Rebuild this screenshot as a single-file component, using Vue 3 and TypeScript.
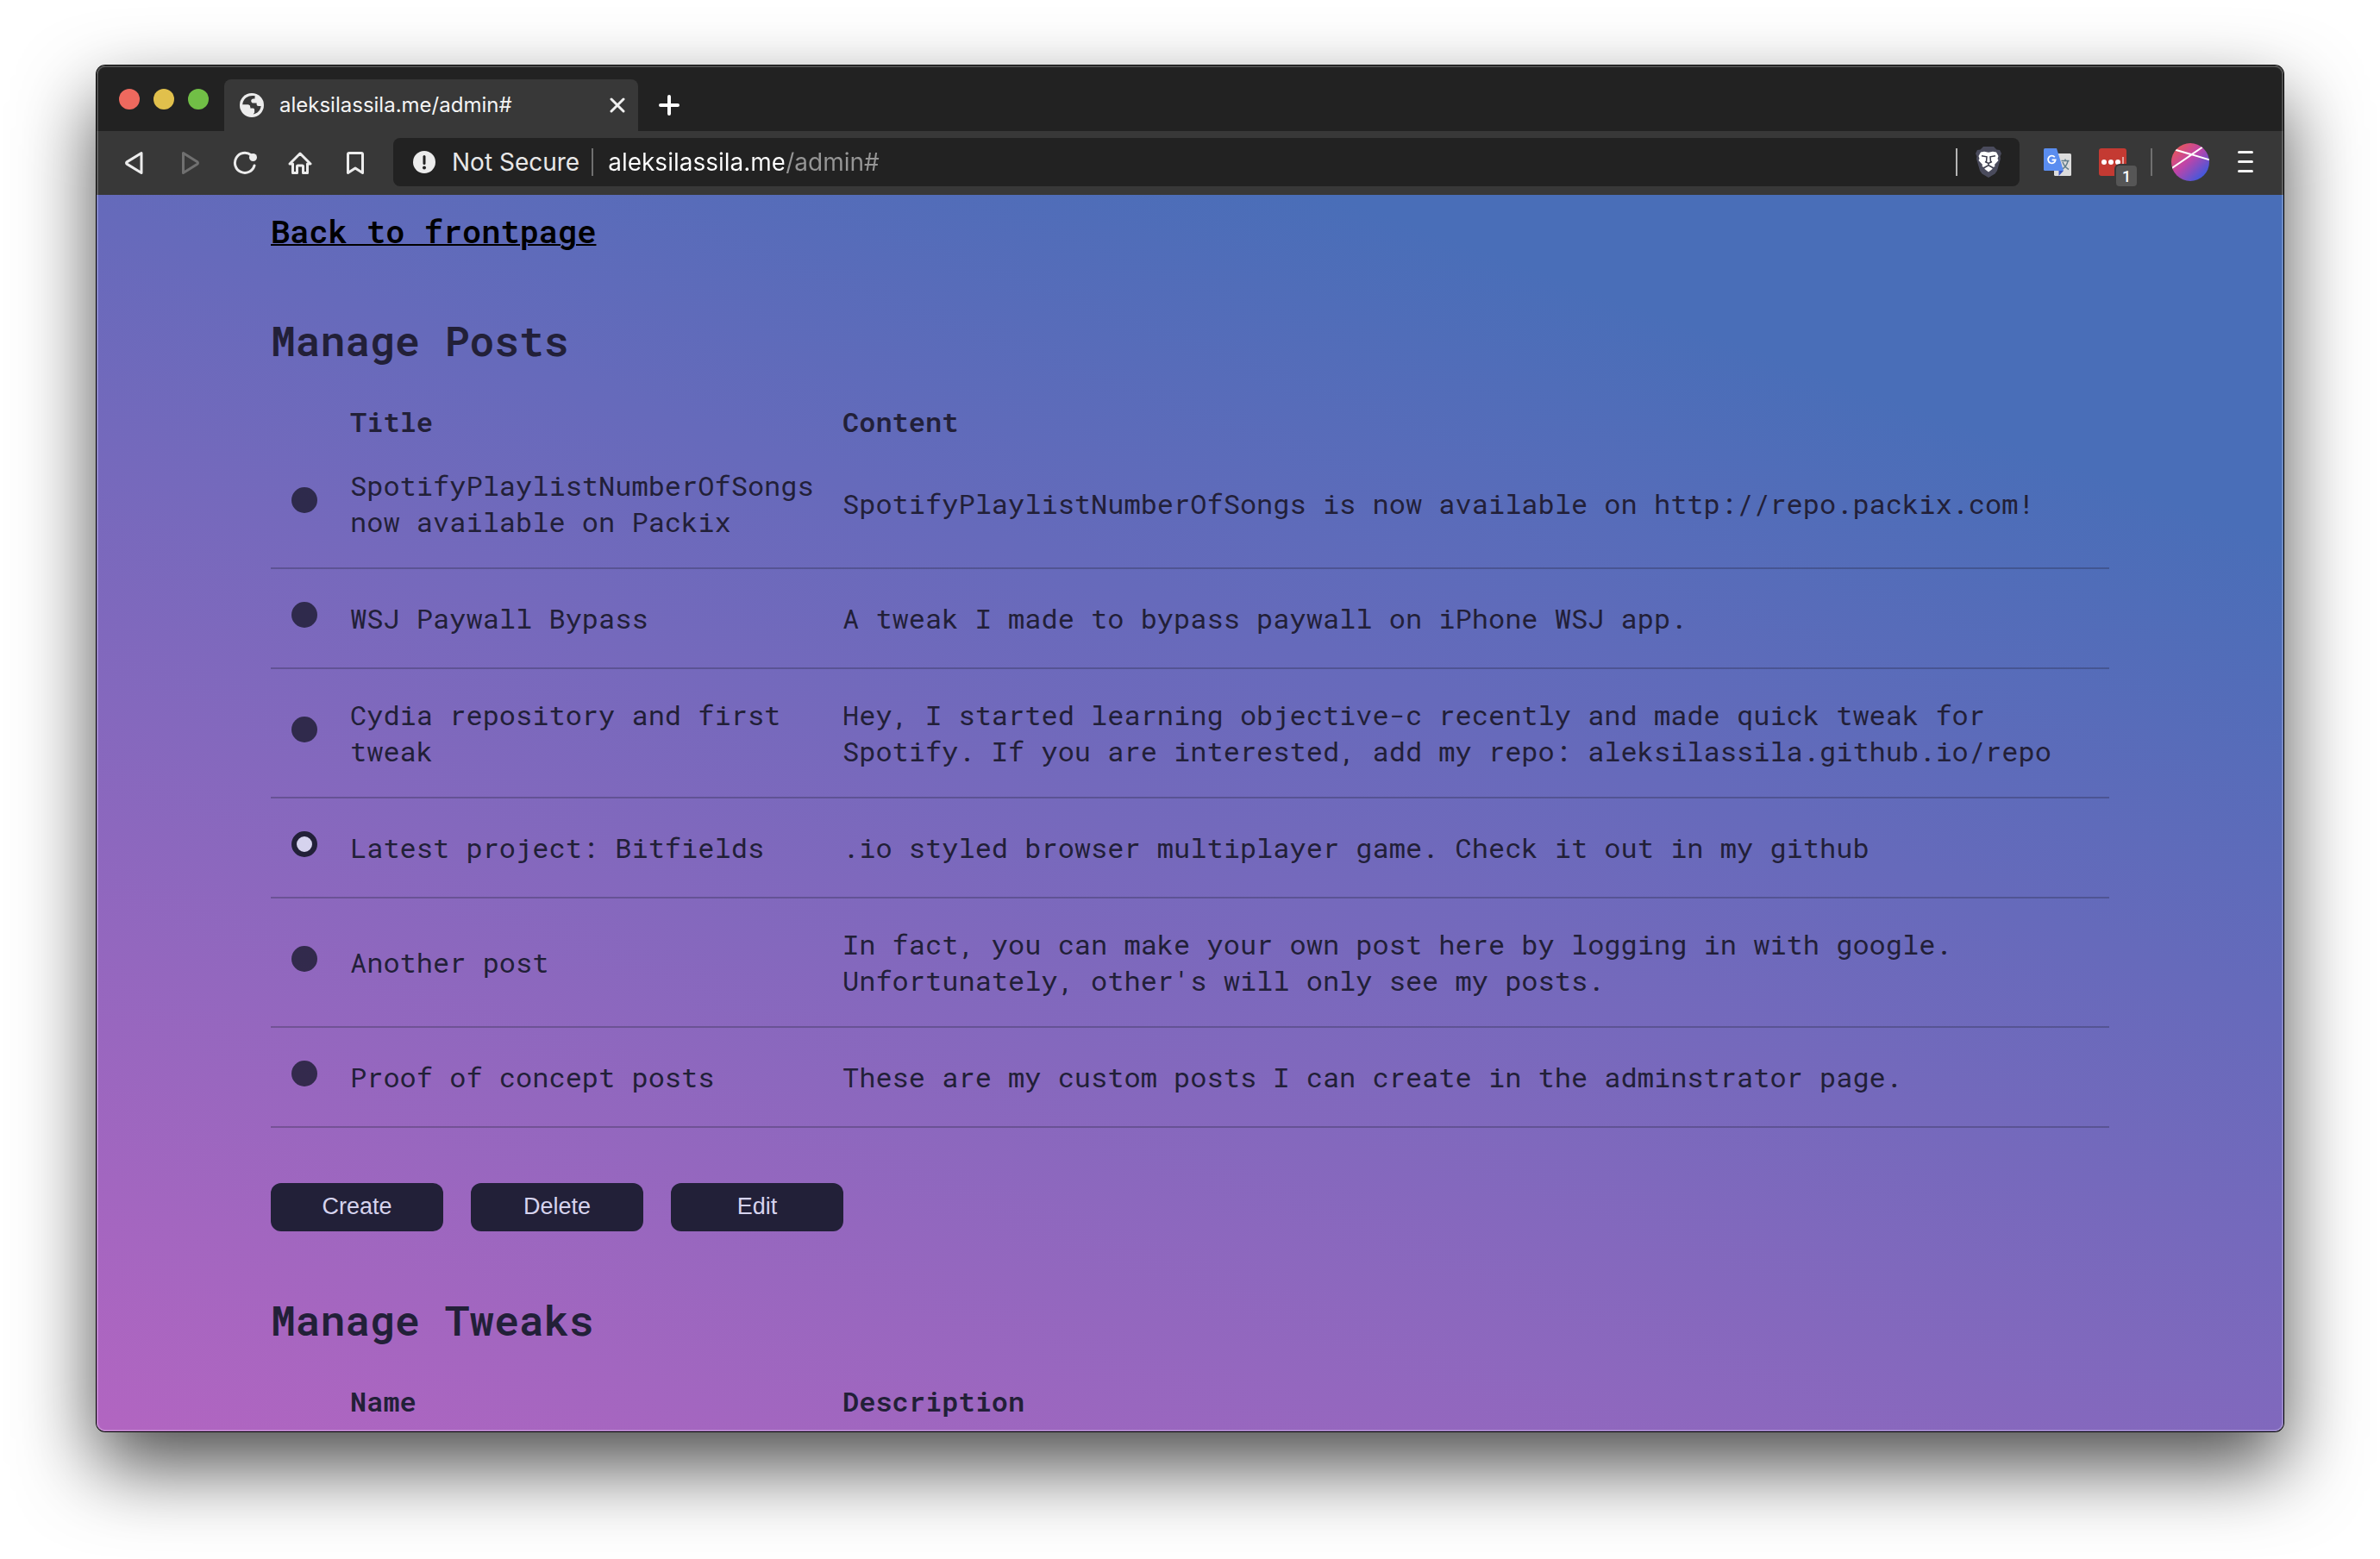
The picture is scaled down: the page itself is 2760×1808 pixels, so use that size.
<script setup lang="ts">
import { ref } from 'vue'

interface Post {
  id: number
  title: string
  content: string
}

const address = ref('aleksilassila.me/admin#')
const selected = ref(4)
const actions: string[] = ['Create', 'Delete', 'Edit']
const posts: Post[] = [
  {
    id: 1,
    title: 'SpotifyPlaylistNumberOfSongs now available on Packix',
    content: 'SpotifyPlaylistNumberOfSongs is now available on http://repo.packix.com!',
  },
  { id: 2, title: 'WSJ Paywall Bypass', content: 'A tweak I made to bypass paywall on iPhone WSJ app.' },
  {
    id: 3,
    title: 'Cydia repository and first tweak',
    content:
      'Hey, I started learning objective-c recently and made quick tweak for Spotify. If you are interested, add my repo: aleksilassila.github.io/repo',
  },
  {
    id: 4,
    title: 'Latest project: Bitfields',
    content: '.io styled browser multiplayer game. Check it out in my github',
  },
  {
    id: 5,
    title: 'Another post',
    content:
      "In fact, you can make your own post here by logging in with google. Unfortunately, other's will only see my posts.",
  },
  {
    id: 6,
    title: 'Proof of concept posts',
    content: 'These are my custom posts I can create in the adminstrator page.',
  },
]
</script>

<template>
  <div class="desktop">
    <div class="window">
      <header class="tabstrip">
        <div class="lights">
          <button class="light red" aria-label="Close window"></button>
          <button class="light yellow" aria-label="Minimize window"></button>
          <button class="light green" aria-label="Zoom window"></button>
        </div>
        <div class="tab">
          <svg class="globe" viewBox="0 0 28 28" width="28" height="28">
            <circle cx="14" cy="14" r="14" fill="#ececec" />
            <path
              d="M11 3.6C6.500 5 3.400 9 3.300 13.500h6.200c1.600 0 2.700 1.200 2.700 2.700v1.300h3.300c1 0 1.600.8 1.600 1.700v3.200l-1.400 2.100c4.800-.8 8.400-4.700 8.900-9.500h-2.700c-1.400 0-2.300-1-2.300-2.300v-1.200h-3.800c-1.500 0-2.600-1.200-2.600-2.600 0-1.500 1.200-2.500 2.600-2.500h1.700V4.700c0-.5.200-.9.500-1.200-2.200-.6-4.800-.5-7 .1z"
              fill="#383838"
            />
            <path d="M3.300 13.500h6.200c1.600 0 2.700 1.200 2.700 2.700v1.300c0 1.300.4 2 1.300 2v5.200C7.800 24.500 3.300 19.500 3.300 13.500z" fill="#ececec" />
          </svg>
          <span class="tab-title">aleksilassila.me/admin#</span>
          <button class="icon" aria-label="Close tab">
            <svg viewBox="0 0 18 18" width="18" height="18">
              <path d="M2 2l14 14M16 2L2 16" stroke="#f0f0f0" stroke-width="3" stroke-linecap="round" />
            </svg>
          </button>
        </div>
        <button class="icon new-tab" aria-label="New tab">
          <svg viewBox="0 0 24 24" width="24" height="24">
            <path d="M12 2v20M2 12h20" stroke="#fff" stroke-width="4" stroke-linecap="round" />
          </svg>
        </button>
      </header>

      <nav class="toolbar">
        <div class="nav-buttons">
          <button class="icon" aria-label="Back">
            <svg viewBox="0 0 28 28" width="28" height="28">
              <path d="M22 2.500v23L5.500 15.400q-2-1.400 0-2.800z" fill="none" stroke="#ececec" stroke-width="3" stroke-linejoin="round" />
            </svg>
          </button>
          <button class="icon" aria-label="Forward">
            <svg viewBox="0 0 28 28" width="28" height="28">
              <path d="M6.500 2.500v23L22.500 15.400q2-1.400 0-2.800z" fill="none" stroke="#707070" stroke-width="3" stroke-linejoin="round" />
            </svg>
          </button>
          <button class="icon" aria-label="Reload">
            <svg viewBox="0 0 28 28" width="28" height="28">
              <path d="M21 4.800A11.500 11.500 0 1 0 25 17" fill="none" stroke="#ececec" stroke-width="3" stroke-linecap="round" />
              <circle cx="23.500" cy="7.500" r="4.500" fill="#ececec" />
            </svg>
          </button>
          <button class="icon" aria-label="Home">
            <svg viewBox="0 0 28 28" width="28" height="28">
              <path d="M2 15L14 3l12 12h-3.500v10.500h-5V18q0-1-1-1h-5q-1 0-1 1v7.500h-5V15z" fill="none" stroke="#ececec" stroke-width="3" stroke-linejoin="round" />
            </svg>
          </button>
          <button class="icon" aria-label="Bookmark">
            <svg viewBox="0 0 28 28" width="28" height="28">
              <path d="M5.500 4q0-1.500 1.500-1.500h14q1.500 0 1.500 1.500v21.500L14 20l-8.500 5.500z" fill="none" stroke="#ececec" stroke-width="3" stroke-linejoin="round" />
            </svg>
          </button>
        </div>

        <div class="omnibox">
          <svg viewBox="0 0 26 26" width="26" height="26">
            <circle cx="13" cy="13" r="13" fill="#ececec" />
            <path d="M13 6.500v8" stroke="#222" stroke-width="3" stroke-linecap="round" />
            <circle cx="13" cy="19.500" r="2" fill="#222" />
          </svg>
          <label class="security" for="address">Not Secure</label>
          <span class="divider dim"></span>
          <input id="address" v-model="address" class="address" type="text" />
          <span class="divider"></span>
          <button class="icon shield" aria-label="Brave Shields">
            <svg viewBox="0 0 30 36" width="30" height="36">
              <path d="M9 0h12l3.500 3.500L28 4l2 4-1.500 3.500.5 2.500-4 14-2.500 3.500L15 36l-7.500-4.500L5 28 1 14l.5-2.500L0 8l2-4 3.500-.5z" fill="#4a4b5c" />
              <path
                d="M6 6.500l4-.8 5 1 5-1 4 .8 2.500 4.500-1 3 1 2-4.500 5 .5 2-3.500 1.500-4-2.500-4 2.500L7.500 23l.5-2-4.500-5 1-2-1-3z"
                fill="#fff"
              />
              <path d="M10.500 24.500l4.500-2 4.500 2v1.500L15 29.500 10.500 26z" fill="#fff" />
              <path d="M7 10.800l6 1-.5 6M23 10.800l-6 1 .5 6M11 17.500l4 2 4-2M15 19v2.500M10 24.500l5-3 5 3" fill="none" stroke="#3b3c4b" stroke-width="1.500" />
            </svg>
          </button>
        </div>

        <div class="extensions">
          <button class="icon" aria-label="Google Translate">
            <svg viewBox="0 0 32 32" width="32" height="32">
              <rect x="12" y="6" width="20" height="26" rx="1.500" fill="#dcdcdc" />
              <path d="M17.500 26l5.500 0-5.500 6z" fill="#3a55c0" />
              <path d="M20.500 14.500h9M25 12.500v2M28 15c-1 4-3.500 7.500-7 9.500M22 16c1.500 4 3.500 6.500 7 8.500" fill="none" stroke="#607d8b" stroke-width="1.500" />
              <path d="M1.500 0H15l8 26H1.500Q0 26 0 24.500v-23Q0 0 1.500 0z" fill="#5a8df0" />
              <path d="M12.800 10.300A4.300 4.300 0 1 0 13.700 13.500H9.600" fill="none" stroke="#fff" stroke-width="1.800" />
            </svg>
          </button>
          <button class="icon password" aria-label="Password manager">
            <svg viewBox="0 0 32 32" width="32" height="32">
              <rect width="32" height="32" rx="3" fill="#c43a32" />
              <circle cx="6" cy="16" r="3" fill="#fff" />
              <circle cx="14" cy="16" r="3" fill="#fff" />
              <circle cx="22" cy="16" r="3" fill="#fff" />
              <path d="M28 10v12" stroke="#f0c8c5" stroke-width="1.500" />
            </svg>
            <span class="badge">1</span>
          </button>
          <span class="divider dim"></span>
          <button class="icon" aria-label="Profile">
            <svg viewBox="0 0 44 44" width="44" height="44">
              <defs>
                <linearGradient id="avatar" x1="0.100" y1="0.100" x2="0.850" y2="0.900">
                  <stop offset="0" stop-color="#e85858" />
                  <stop offset="0.450" stop-color="#c044a8" />
                  <stop offset="1" stop-color="#3a5ae0" />
                </linearGradient>
                <clipPath id="round"><circle cx="22" cy="22" r="22" /></clipPath>
              </defs>
              <g clip-path="url(#round)">
                <rect width="44" height="44" fill="url(#avatar)" />
                <path d="M4 7.500L45 19.500M0 29.500L37 4" stroke="#fff" stroke-width="2" />
              </g>
            </svg>
          </button>
          <button class="icon menu" aria-label="Menu">
            <svg viewBox="0 0 18 26" width="18" height="26">
              <path d="M1.500 1.500h15M1.500 12.500h15M1.500 23.500h15" stroke="#f4f4f4" stroke-width="3" stroke-linecap="round" />
            </svg>
          </button>
        </div>
      </nav>

      <main class="page">
        <h3 class="back"><a href="#">Back to frontpage</a></h3>

        <section>
          <h2>Manage Posts</h2>
          <table>
            <thead>
              <tr>
                <th class="pick"></th>
                <th class="name" scope="col">Title</th>
                <th scope="col">Content</th>
              </tr>
            </thead>
            <tbody>
              <tr v-for="post in posts" :key="post.id">
                <td class="pick">
                  <input :id="`post-${post.id}`" v-model="selected" type="radio" name="post" :value="post.id" />
                </td>
                <td class="name"><label :for="`post-${post.id}`">{{ post.title }}</label></td>
                <td>{{ post.content }}</td>
              </tr>
            </tbody>
          </table>
          <div class="actions">
            <button v-for="action in actions" :key="action" class="action" type="button">{{ action }}</button>
          </div>
        </section>

        <section>
          <h2>Manage Tweaks</h2>
          <table>
            <thead>
              <tr>
                <th class="pick"></th>
                <th class="name" scope="col">Name</th>
                <th scope="col">Description</th>
              </tr>
            </thead>
          </table>
        </section>
      </main>
    </div>
  </div>
</template>

<style>
body {
  margin: 0;
  background: #fff;
}
</style>

<style scoped>
.desktop {
  box-sizing: border-box;
  height: 100vh;
  padding: 76px 112px 148px;
  display: flex;
  overflow: hidden;
}

.window {
  position: relative;
  flex: 1;
  min-width: 0;
  display: flex;
  flex-direction: column;
  overflow: hidden;
  border-radius: 10px;
  box-shadow: 0 0 0 1px #000, 0 40px 90px rgba(0, 0, 0, 0.7);
  font-family: Inter, Roboto, sans-serif;
}

/* Light rim along the inside of the window edge */
.window::after {
  content: '';
  position: absolute;
  inset: 0;
  border-radius: 10px;
  box-shadow: inset 0 0 0 2px rgba(255, 255, 255, 0.2);
  pointer-events: none;
}

.icon {
  display: flex;
  padding: 0;
  border: 0;
  background: none;
}

.icon svg,
.omnibox > svg,
.globe {
  display: block;
  flex: none;
}

.tabstrip {
  flex: none;
  height: 76px;
  display: flex;
  align-items: flex-end;
  background: #222;
}

.lights {
  display: flex;
  gap: 16px;
  padding: 0 18px 25px 26px;
  width: 104px;
}

.light {
  width: 24px;
  height: 24px;
  padding: 0;
  border: 0;
  border-radius: 50%;
}

.red {
  background: #ee695e;
}

.yellow {
  background: #e1c04c;
}

.green {
  background: #71bf46;
}

.tab {
  box-sizing: border-box;
  width: 480px;
  height: 60px;
  padding: 0 15px 0 18px;
  display: flex;
  align-items: center;
  gap: 18px;
  border-radius: 8px 8px 0 0;
  background: #383838;
}

.tab-title {
  flex: 1;
  font-size: 24px;
  line-height: 32px;
  color: #f4f4f4;
}

.new-tab {
  padding: 0 0 18px 24px;
}

.toolbar {
  flex: none;
  height: 74px;
  display: flex;
  align-items: center;
  padding: 0 35px 0 30px;
  background: #383838;
}

.nav-buttons {
  display: flex;
  gap: 36px;
  padding-right: 30px;
}

.omnibox {
  flex: 1;
  height: 56px;
  margin-bottom: 2px;
  padding: 0 21px 0 23px;
  box-sizing: border-box;
  display: flex;
  align-items: center;
  border-radius: 8px;
  background: #222;
  font-size: 28px;
}

.security {
  margin: 0 14px 0 19px;
  color: #e8e8e8;
}

.divider {
  width: 2px;
  height: 32px;
  background: #b4b4b4;
}

.divider.dim {
  background: #707070;
}

.address {
  flex: 1;
  min-width: 0;
  margin-left: 17px;
  padding: 0;
  border: 0;
  outline: 0;
  font: inherit;
  color: transparent;
  background: linear-gradient(90deg, #fff 204px, #969696 204px);
  background-clip: text;
}

.shield {
  margin-left: 21px;
}

.extensions {
  display: flex;
  align-items: center;
  padding: 0 0 2px 28px;
}

.password {
  position: relative;
  margin: 0 28px 0 32px;
}

.badge {
  position: absolute;
  left: 20px;
  top: 20px;
  width: 24px;
  height: 24px;
  border-radius: 4px;
  box-shadow: 0 0 0 2px #383838;
  background: #565656;
  color: #fff;
  font: 500 18px/26px Roboto, sans-serif;
  text-align: center;
}

.extensions > .divider {
  margin-right: 22px;
}

.menu {
  margin-left: 33px;
}

.page {
  flex: 1;
  min-height: 0;
  overflow: hidden;
  padding: 18px 202px 0;
  background: linear-gradient(20deg, #b265c1 0%, #666abb 60%, #496eb8 83%);
  color: #222038;
  font-family: 'Roboto Mono', 'Liberation Mono', monospace;
  font-size: 32px;
}

.back {
  margin: 0 0 71px;
  font-size: 37px;
  font-weight: 600;
  line-height: 48px;
}

.back a {
  color: #000;
  text-decoration-thickness: 2px;
}

h2 {
  margin: 0 0 41px;
  font-size: 48px;
  font-weight: 600;
  line-height: 64px;
}

table {
  width: 100%;
  table-layout: fixed;
  border-collapse: separate;
  border-spacing: 0;
}

th {
  padding: 0;
  font-weight: 600;
  line-height: 42px;
  text-align: left;
}

td {
  padding: 32px 0;
  line-height: 42px;
  border-bottom: 2px solid rgba(34, 32, 56, 0.3);
  vertical-align: middle;
}

.pick {
  width: 92px;
}

td.pick {
  padding: 38px 0 46px;
}

.name {
  width: 539px;
  padding-right: 32px;
}

.pick input {
  appearance: none;
  display: block;
  box-sizing: border-box;
  width: 30px;
  height: 30px;
  margin: 0 0 0 24px;
  border-radius: 50%;
  background: #222038;
  opacity: 0.85;
}

.pick input:checked {
  border: 6px solid #222038;
  background: #d6d3ee;
  opacity: 1;
}

.actions {
  display: flex;
  gap: 32px;
  margin: 64px 0 71px;
}

.action {
  width: 200px;
  height: 56px;
  padding: 0 0 2px;
  border: 0;
  border-radius: 12px;
  background: #222038;
  color: #d6d3ee;
  font: 27px/32px 'Liberation Sans', Arial, sans-serif;
}
</style>
